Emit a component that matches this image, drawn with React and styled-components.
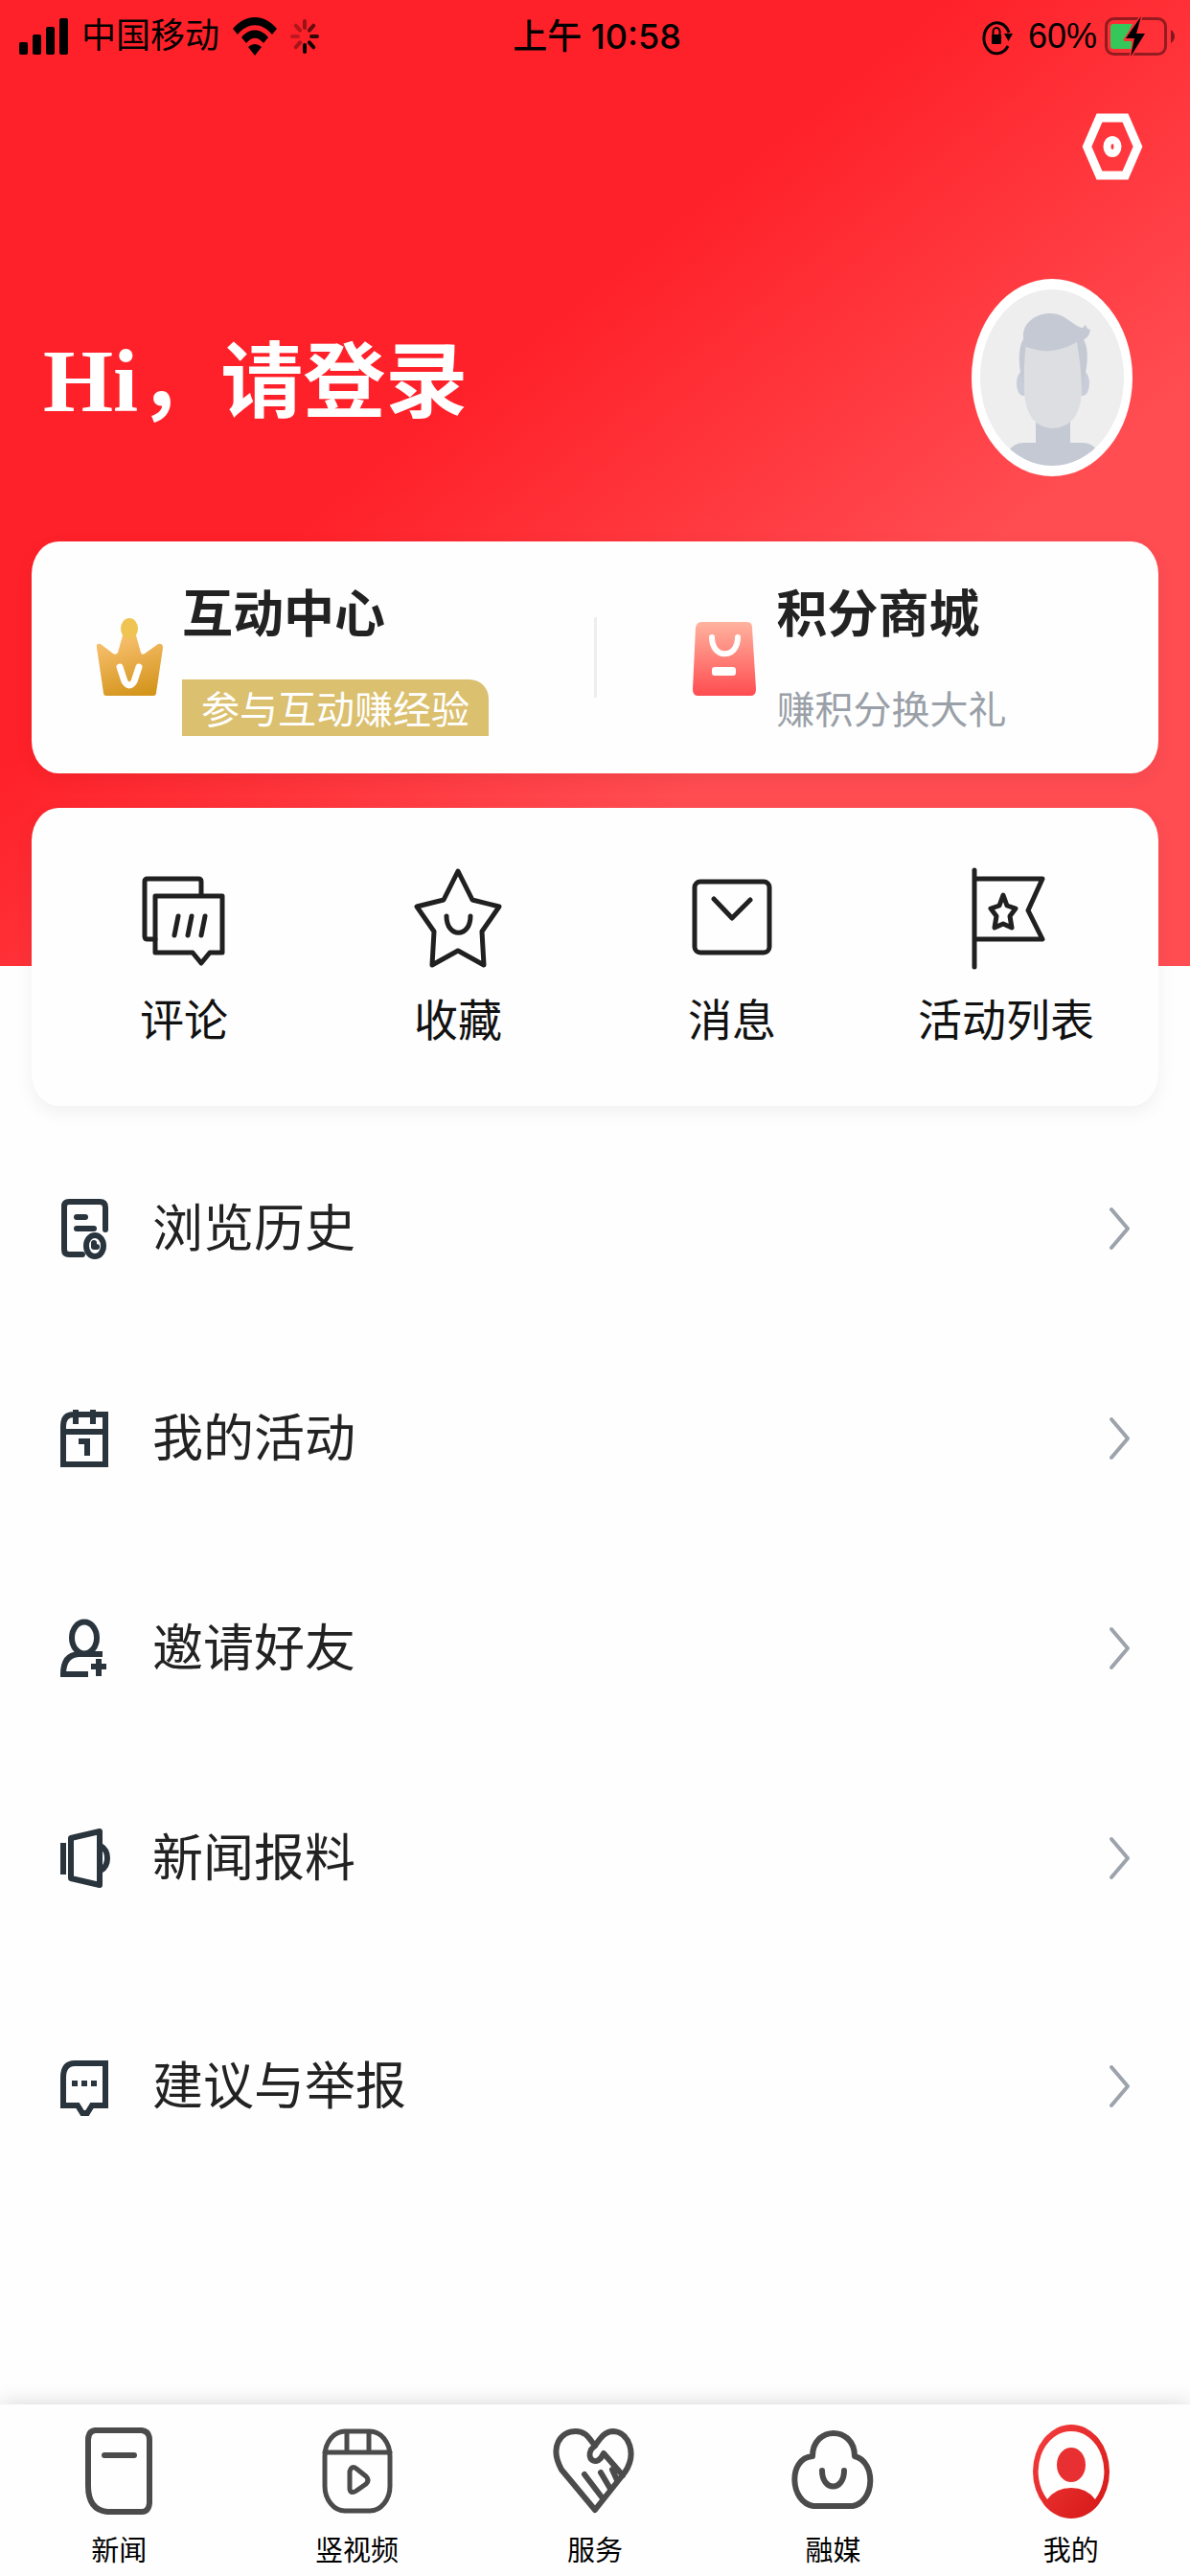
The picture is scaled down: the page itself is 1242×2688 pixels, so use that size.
import React from 'react';
import styled, { createGlobalStyle, css } from 'styled-components';

const sans = `"Noto Sans CJK SC", sans-serif`;

const GlobalStyle = createGlobalStyle`
  *, *::before, *::after { box-sizing: border-box; }
  body { margin: 0; background: #fefefe; color: #222; font-family: ${sans}; }
  h1, h2, p, ul { margin: 0; padding: 0; font-weight: inherit; }
  ul { list-style: none; }
  a { color: inherit; text-decoration: none; }
  svg { display: block; flex: none; overflow: visible; }
`;

const Page = styled.div`
  min-height: 100vh;
  display: flex;
  flex-direction: column;
`;

const Hero = styled.header`
  padding-bottom: 201px;
  background: linear-gradient(to bottom right, #ff2129 40%, #ff4d52 70%);
`;

const StatusBar = styled.div`
  height: 76px;
  padding: 0 16px 0 20px;
  display: grid;
  grid-template-columns: 1fr auto 1fr;
  align-items: center;
  color: #000;
  font-family: "Liberation Sans", ${sans};
  font-size: 36px;
  line-height: 76px;
`;

const StatusSide = styled.div`
  display: flex;
  align-items: center;
  justify-content: ${(p) => (p.$end ? 'flex-end' : 'flex-start')};
  gap: ${(p) => (p.$end ? 8 : 14)}px;
`;

const StatusTime = styled.time`
  font-family: Inter, ${sans};
  font-weight: 500;
`;

const LockSlot = styled.span`
  margin-right: 8px;
`;

const Toolbar = styled.div`
  display: flex;
  justify-content: flex-end;
  padding: 42px 50px 0;
`;

const IconButton = styled.button`
  border: 0;
  padding: 0;
  background: none;
  cursor: pointer;
`;

const Profile = styled.div`
  display: flex;
  align-items: center;
  justify-content: space-between;
  padding: 103px 60px 68px 45px;
`;

const Greeting = styled.h1`
  padding-top: 8px;
  color: #fff;
  font: 700 86px/120px "Liberation Serif", ${sans};
`;

const Hello = styled.span`
  font-size: 94px;
`;

const card = css`
  margin: 0 33px;
  border-radius: 28px / 34px;
  background: #fefefe;
  box-shadow: 0 6px 20px rgba(0, 0, 0, 0.06);
`;

const PromoCard = styled.section`
  ${card}
  height: 242px;
  display: grid;
  grid-template-columns: 1fr 3px 1fr;
  align-items: center;
`;

const Divider = styled.span`
  height: 84px;
  background: #eee;
`;

const Promo = styled.a`
  display: flex;
  align-items: center;
  gap: 20px;
  padding-left: ${(p) => p.$inset}px;
`;

const PromoText = styled.span`
  display: flex;
  flex-direction: column;
  align-items: flex-start;
  gap: 40px;
`;

const PromoTitle = styled.strong`
  font-size: 53px;
  line-height: 64px;
  font-weight: 700;
`;

const PromoNote = styled.span`
  height: 59px;
  font-size: 40px;
  line-height: 59px;
  color: #9aa0a8;
  ${(p) => p.$badge && css`
    padding: 0 20px;
    border-radius: 0 20px 0 0;
    background: #dbc06f;
    color: #fff;
  `}
`;

const ShortcutCard = styled.nav`
  ${card}
  margin-top: -165px;
  height: 311px;
  padding: 62px 16px 0;
  display: grid;
  grid-template-columns: repeat(4, 1fr);
`;

const Shortcut = styled.a`
  display: flex;
  flex-direction: column;
  align-items: center;
  gap: 20px;
  color: #111;
  font-size: 46px;
  line-height: 60px;
`;

const Menu = styled.main`
  flex: 1;
  padding-top: 18px;
`;

const MenuGroup = styled.ul`
  & + & { margin-top: 19px; }
`;

const MenuLink = styled.a`
  height: 219px;
  padding: 0 62px;
  display: flex;
  align-items: center;
  gap: 45px;
  font-size: 53px;
  line-height: 64px;
`;

const MenuLabel = styled.span`
  flex: 1;
  padding-bottom: 8px;
`;

const TabBar = styled.nav`
  height: 179px;
  display: grid;
  grid-template-columns: repeat(5, 1fr);
  background: #fefefe;
  box-shadow: 0 -2px 20px rgba(0, 0, 0, 0.14);
`;

const Tab = styled.a`
  padding-top: 20px;
  display: flex;
  flex-direction: column;
  align-items: center;
  gap: 10px;
  color: #000;
  font-size: 29px;
  line-height: 40px;
`;

const Signal = () => (
  <svg width="51" height="40" viewBox="0 0 51 40" role="img" aria-label="信号">
    <rect y="26" width="9" height="13" rx="2" />
    <rect x="14" y="18" width="9" height="21" rx="2" />
    <rect x="28" y="10" width="9" height="29" rx="2" />
    <rect x="42" y="1" width="9" height="38" rx="2" />
  </svg>
);

const Wifi = () => (
  <svg width="46" height="42" viewBox="0 0 46 42" role="img" aria-label="无线网络">
    <path d="M0 13C13-3 33-3 46 13L41 19C30 6 16 6 5 19Z" />
    <path d="M9 22C17 12 29 12 37 22L32 28C26 21 20 21 14 28Z" />
    <path d="M16 32Q23 26 30 32L23 41Z" />
  </svg>
);

const Spinner = () => (
  <svg width="30" height="38" viewBox="-15 -19 30 38" aria-hidden="true">
    <g stroke="#000" strokeWidth="4" strokeLinecap="round">
      {[0.4, 0.6, 0.8, 0.9, 1, 0.35, 0.25, 0.3].map((o, i) => {
        const a = (i * Math.PI) / 4;
        const x = Math.sin(a);
        const y = -Math.cos(a);
        return <line key={i} opacity={o} x1={x * 7} y1={y * 9} x2={x * 13} y2={y * 16} />;
      })}
    </g>
  </svg>
);

const RotationLock = () => (
  <svg width="32" height="36" viewBox="0 0 32 36" role="img" aria-label="方向锁定">
    <path d="M27 28A13.500 16 0 1 1 28 14" fill="none" stroke="#000" strokeWidth="3" />
    <path d="M23 15h9l-4.500 8z" />
    <rect x="10" y="16" width="10" height="10" rx="1" />
    <path d="M11.500 17v-4a3.500 4 0 0 1 7 0v4" fill="none" stroke="#000" strokeWidth="2" />
  </svg>
);

const Battery = () => (
  <svg width="73" height="42" viewBox="0 0 73 42" role="img" aria-label="充电中">
    <rect x="1.500" y="2.500" width="62" height="37" rx="8" fill="none" stroke="#000" strokeOpacity=".42" strokeWidth="3" />
    <path d="M69 14q4 3 4 7t-4 7z" fillOpacity=".5" />
    <path d="M9 8h20L20 26h8v8H9q-3 0-3-3V11q0-3 3-3z" fill="#35c759" />
    <path d="M38 0L22 23h9l-4 19 15-24h-9z" stroke="#ff3037" strokeWidth="3" paintOrder="stroke" />
  </svg>
);

const Settings = () => (
  <svg width="62" height="70" viewBox="0 0 62 70" aria-hidden="true">
    <path d="M17.500 5h27L57.500 35 44.500 65h-27L4.500 35z" fill="none" stroke="#fff" strokeWidth="9" />
    <ellipse cx="31" cy="35" rx="5.500" ry="7" fill="none" stroke="#fff" strokeWidth="8" />
  </svg>
);

const Avatar = () => (
  <svg width="168" height="206" viewBox="0 0 168 206" aria-hidden="true">
    <defs>
      <clipPath id="face-clip"><ellipse cx="84" cy="103" rx="75" ry="92" /></clipPath>
    </defs>
    <ellipse cx="84" cy="103" rx="84" ry="103" fill="#fff" />
    <ellipse cx="84" cy="103" rx="75" ry="92" fill="#eee" />
    <g clipPath="url(#face-clip)">
      <path d="M30 206L38 180Q44 171 55 171H67V145H103V171H116Q126 171 132 180L140 206z" fill="#c5c9d4" />
      <ellipse cx="54" cy="109" rx="7" ry="13" fill="#c9cdda" />
      <ellipse cx="116" cy="109" rx="7" ry="13" fill="#c9cdda" />
      <path d="M56 60Q47 71 51 98L55 113H115L119 98Q124 72 115 60z" fill="#c5c9d4" />
      <path d="M57 66H110Q115 95 115 118Q113 155 84 156Q57 154 55 118Q54 90 57 66z" fill="#dcdee2" />
      <path d="M57 71L54 61V57C56 43 70 36 82 36C99 36 106 50 116 51L119 48L121 52L124 53C123 60 119 64 110 66C92 76 75 78 57 71z" fill="#c5c9d4" />
    </g>
  </svg>
);

const Crown = () => (
  <svg width="70" height="82" viewBox="0 0 70 82" aria-hidden="true">
    <defs>
      <linearGradient id="crown" x1=".3" y1="0" x2=".6" y2="1">
        <stop offset="0" stopColor="#f9c172" />
        <stop offset="1" stopColor="#d4951c" />
      </linearGradient>
    </defs>
    <path d="M28 18H42L47 36Q48 39 51 37L65 27Q70 26 70 31L63 78Q63 81 60 81H11Q8 81 8 78L1 31Q0 26 5 27L18 37Q21 39 23 36z" fill="url(#crown)" />
    <ellipse cx="35" cy="11" rx="9" ry="11" fill="#f0c453" />
    <path d="M25 51L30 66Q35 74 40 66L45 51" fill="none" stroke="#fff" strokeWidth="7" strokeLinecap="round" />
  </svg>
);

const Bag = () => (
  <svg width="70" height="82" viewBox="0 0 70 82" aria-hidden="true">
    <defs>
      <linearGradient id="bag" x1="0" y1="0" x2="0" y2="1">
        <stop offset="0" stopColor="#ffb39f" />
        <stop offset="1" stopColor="#ff4c50" />
      </linearGradient>
    </defs>
    <path d="M11 4H59Q64 4 64 10L68 74Q68 81 63 81H7Q2 81 2 74L5 10Q6 4 11 4z" fill="url(#bag)" />
    <path d="M22 20C22 43 49 43 49 20" fill="none" stroke="#fff" strokeWidth="6" strokeLinecap="round" />
    <rect x="22" y="51" width="25" height="9" rx="3" fill="#fff" />
  </svg>
);

const Line = ({ width, height, stroke = '#202020', sw = 5, children }) => (
  <svg width={width} height={height} viewBox={`0 0 ${width} ${height}`} fill="none" stroke={stroke}
    strokeWidth={sw} strokeLinejoin="round" strokeLinecap="round" aria-hidden="true">
    {children}
  </svg>
);

const Comments = () => (
  <Line width={92} height={106}>
    <path d="M16 75H8Q5 75 5 72V15Q5 12 8 12H61Q64 12 64 15V29" />
    <path d="M16 30H86V89H73L64 100 55 89H16z" />
    <path d="M40 51L36 71M54 51L50 71M68 51L64 71" />
  </Line>
);

const Star = () => (
  <Line width={92} height={106}>
    <path d="M46 4L61 34 89 41 71 67 73 102 46 87 19 102 21 67 3 41 31 34z" />
    <path d="M34 51C34 74 59 74 59 51" />
  </Line>
);

const Message = () => (
  <Line width={92} height={106}>
    <rect x="7" y="15" width="78" height="74" rx="6" />
    <path d="M27 33L46 53 65 34" />
  </Line>
);

const Flag = () => (
  <Line width={92} height={106}>
    <path d="M13 3V104M13 12H84L69 45 84 75H13" />
    <path d="M43 29L47 40 56 43 50 51 52 63 43 59 34 63 36 51 30 43 39 40z" />
  </Line>
);

const ink = '#29343d';

const History = () => (
  <Line width={52} height={62} stroke={ink} sw={6}>
    <path d="M24 58H10Q5 58 5 53V8Q5 3 10 3H42Q48 3 48 9V32" />
    <path d="M18 19H27M18 31H36" />
    <ellipse cx="37" cy="49" rx="9" ry="11" />
    <path d="M36 46V50H39" />
  </Line>
);

const Calendar = () => (
  <svg width="52" height="62" viewBox="0 0 52 62" fill="none" stroke={ink} strokeWidth="6" aria-hidden="true">
    <path d="M4 58V18Q4 6 15 6H48V58zM4 24H48M17 1V16M35 1V16" />
    <path d="M20 34H29V49" />
  </svg>
);

const Invite = () => (
  <svg width="52" height="62" viewBox="0 0 52 62" fill="none" stroke={ink} strokeWidth="6" aria-hidden="true">
    <ellipse cx="26" cy="20" rx="13" ry="16.500" />
    <path d="M45 37H20Q4 38 4 58H30M33 50H49M41 42V60" />
  </svg>
);

const Megaphone = () => (
  <svg width="52" height="62" viewBox="0 0 52 62" fill="none" stroke={ink} strokeWidth="6" strokeLinejoin="round" aria-hidden="true">
    <path d="M4 15V48M12 10L42 3V59L12 52zM43 18Q50 22 50 31T43 44" />
  </svg>
);

const Feedback = () => (
  <svg width="52" height="62" viewBox="0 0 52 62" fill="none" stroke={ink} strokeWidth="6" aria-hidden="true">
    <path d="M4 51V22Q4 7 16 7H48V51H34L29 59H24L19 51z" />
    <path d="M13 28H19M23 28H29M33 28H39" />
  </svg>
);

const Chevron = () => (
  <Line width={22} height={46} stroke="#9da3ab" sw={4}>
    <path d="M2 3L19 23 2 43" />
  </Line>
);

const gray = '#4b4b4b';

const NewsTab = () => (
  <Line width={84} height={100} stroke={gray} sw={6}>
    <path d="M17 7H66Q74 8 74 17V83Q73 92 66 92H30Q10 90 10 65V17Q10 8 17 7z" />
    <path d="M27 33H58" />
  </Line>
);

const VideoTab = () => (
  <Line width={84} height={100} stroke={gray} sw={5}>
    <rect x="8" y="8" width="68" height="83" rx="21" ry="26" />
    <path d="M8 30H76M31 10V29M54 10V29" />
    <path d="M34 50Q36 43 41 47L51 55Q55 59 51 63L41 70Q35 74 34 68z" />
  </Line>
);

const ServiceTab = () => (
  <Line width={84} height={100} stroke={gray} sw={6}>
    <path d="M42 90L7 48C-6 24 6 8 22 8C33 8 36 16 42 23C47 16 52 8 61 8C78 9 86 32 73 51L42 90" />
    <path d="M42 23L38 27C33 37 42 43 48 36L51 31 71 54M31 53L50 78M48 51L58 68M60 48L65 59" />
  </Line>
);

const MediaTab = () => (
  <Line width={84} height={100} stroke={gray} sw={6}>
    <path d="M22 86C-3 82-5 36 21 34C21 2 65 2 65 34C88 40 86 82 63 86z" />
    <path d="M31 49C31 71 54 71 54 49" />
  </Line>
);

const MineTab = () => (
  <svg width="84" height="100" viewBox="0 0 84 100" aria-hidden="true">
    <defs>
      <linearGradient id="mine" x1="0" y1="0" x2="1" y2="1">
        <stop offset="0" stopColor="#f63f3f" />
        <stop offset="1" stopColor="#d41616" />
      </linearGradient>
    </defs>
    <path fillRule="evenodd" fill="url(#mine)" d="M42 1A40 49 0 1 1 42 99A40 49 0 1 1 42 1zM42 8A34 42 0 0 0 17 79Q26 67 42 67T67 79A34 42 0 0 0 42 8z" />
    <ellipse cx="42" cy="43" rx="15" ry="18" fill="#e83032" />
  </svg>
);

const shortcuts = [
  ['评论', Comments],
  ['收藏', Star],
  ['消息', Message],
  ['活动列表', Flag],
];

const menuGroups = [
  [
    ['浏览历史', History],
    ['我的活动', Calendar],
    ['邀请好友', Invite],
    ['新闻报料', Megaphone],
  ],
  [['建议与举报', Feedback]],
];

const tabs = [
  ['新闻', NewsTab],
  ['竖视频', VideoTab],
  ['服务', ServiceTab],
  ['融媒', MediaTab],
  ['我的', MineTab],
];

export default function App() {
  return (
    <Page>
      <GlobalStyle />
      <Hero>
        <StatusBar>
          <StatusSide>
            <Signal />
            <span>中国移动</span>
            <Wifi />
            <Spinner />
          </StatusSide>
          <StatusTime>上午 10:58</StatusTime>
          <StatusSide $end>
            <LockSlot><RotationLock /></LockSlot>
            <span>60%</span>
            <Battery />
          </StatusSide>
        </StatusBar>
        <Toolbar>
          <IconButton type="button" aria-label="设置"><Settings /></IconButton>
        </Toolbar>
        <Profile>
          <Greeting><a href="#login"><Hello>Hi</Hello>，请登录</a></Greeting>
          <IconButton type="button" aria-label="头像"><Avatar /></IconButton>
        </Profile>
        <PromoCard>
          <Promo href="#interact" $inset={67}>
            <Crown />
            <PromoText>
              <PromoTitle>互动中心</PromoTitle>
              <PromoNote $badge>参与互动赚经验</PromoNote>
            </PromoText>
          </Promo>
          <Divider />
          <Promo href="#mall" $inset={98}>
            <Bag />
            <PromoText>
              <PromoTitle>积分商城</PromoTitle>
              <PromoNote>赚积分换大礼</PromoNote>
            </PromoText>
          </Promo>
        </PromoCard>
      </Hero>
      <ShortcutCard aria-label="快捷入口">
        {shortcuts.map(([label, Icon]) => (
          <Shortcut key={label} href={`#${label}`}>
            <Icon />
            {label}
          </Shortcut>
        ))}
      </ShortcutCard>
      <Menu>
        {menuGroups.map((group, i) => (
          <MenuGroup key={i}>
            {group.map(([label, Icon]) => (
              <li key={label}>
                <MenuLink href={`#${label}`}>
                  <Icon />
                  <MenuLabel>{label}</MenuLabel>
                  <Chevron />
                </MenuLink>
              </li>
            ))}
          </MenuGroup>
        ))}
      </Menu>
      <TabBar aria-label="主导航">
        {tabs.map(([label, Icon]) => (
          <Tab key={label} href={`#${label}`} aria-current={label === '我的' ? 'page' : undefined}>
            <Icon />
            {label}
          </Tab>
        ))}
      </TabBar>
    </Page>
  );
}
